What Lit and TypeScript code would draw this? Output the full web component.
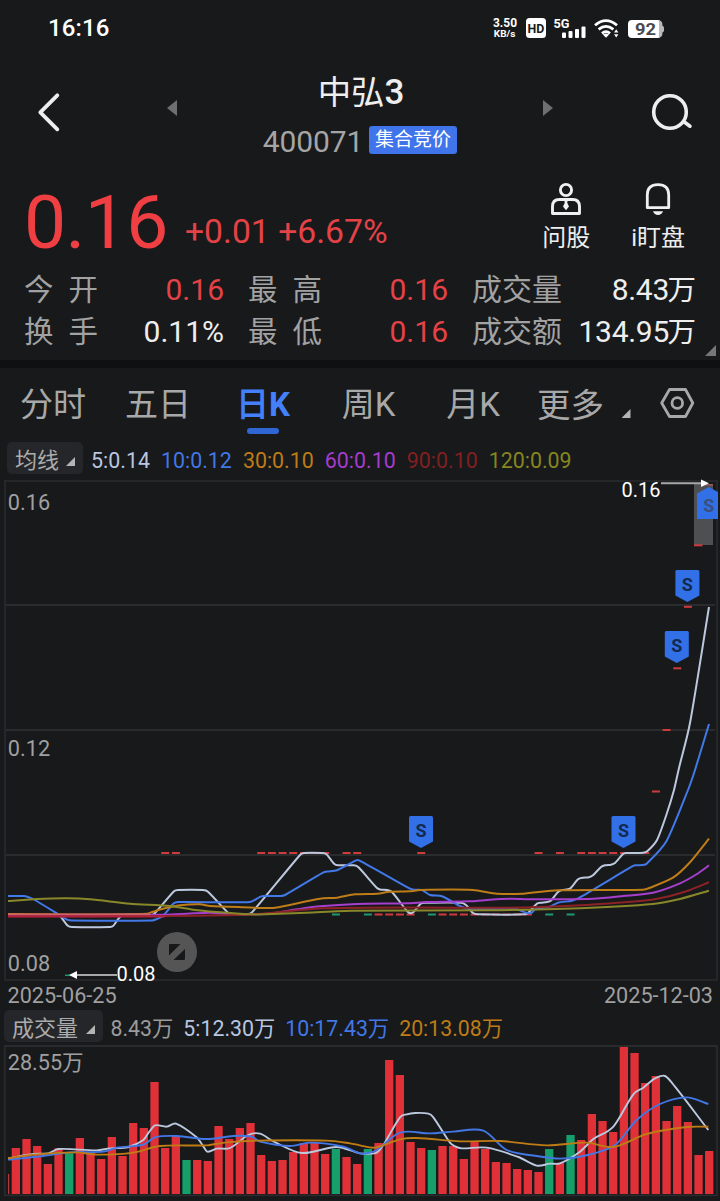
import { LitElement, html, svg, css } from "lit";
import { customElement } from "lit/decorators.js";

type Pt = [number, number];

const PITCH = 10.667;
const FIRST = 15.9;
const center = (i: number) => FIRST + PITCH * i;

function parse(src: string): Pt[] {
  return src.trim().split(/\s+/).map((p) => p.split(",").map(Number) as Pt);
}

/* Light Catmull-Rom smoothing through the given points. */
function curve(pts: Pt[], t = 0.12): string {
  let d = `M${pts[0][0]} ${pts[0][1]}`;
  for (let i = 0; i < pts.length - 1; i++) {
    const a = pts[Math.max(i - 1, 0)];
    const b = pts[i];
    const c = pts[i + 1];
    const e = pts[Math.min(i + 2, pts.length - 1)];
    const w = c[0] - b[0];
    const s1 = ((c[1] - a[1]) / (c[0] - a[0] || 1)) * w * t * 2;
    const s2 = ((e[1] - b[1]) / (e[0] - b[0] || 1)) * w * t * 2;
    const k = w * t * 2;
    d += `C${(b[0] + k).toFixed(2)} ${(b[1] + s1).toFixed(2)} ${(c[0] - k).toFixed(2)} ${(c[1] - s2).toFixed(2)} ${c[0]} ${c[1]}`;
  }
  return d;
}

const MA = {
  ma120: "8,901 37,899 67,898.3 90,899.3 130,903.7 170,906 193,909.7 217,912 250,914.3 265,914.3 307,912.7 353,910.7 490,910.3 580,908.3 653,904 680,899 709,890.7",
  ma90: "8,916.3 165,916 250,914.6 290,911 323,908.3 407,907.5 500,907.8 547,906.7 590,904.7 647,900.3 670,896 690,890 709,882.3",
  ma60: "8,915 165,914.7 190,913.5 210,912.8 228,914 265,914 297,909.3 320,906.3 357,904 407,903.3 427,902 470,901.3 490,899.7 512,898.7 530,899.3 593,898.7 623,896 653,892.7 680,883.3 697,874 709,865.3",
  ma30: "8,914 70,914.5 147,913.7 153,911.7 162,909 180,905.3 200,904.3 210,906 250,907.5 262,908 275,907.7 320,898.7 337,897.7 355,894.3 377,893.7 390,891.7 410,891.3 420,890 473,890 497,893.7 523,893.7 558,890.3 643,889.7 650,887.7 673,877.7 690,862.3 709,838.7",
  ma10: "8,896 24,896 28,897 33,899 58,914 67,919.6 72,920.5 152,920.5 157,919 163,916 173,904 178,902 250,902 260,896.9 264,896 281,896 285,895 323,872.7 327,871.6 337,870.3 355,860.9 359,860.3 410,888.7 414,889.7 422,890 430,895 442,896.3 460,906 467,908.6 515,908.7 521.7,911 527,913 531.7,912.7 535,909.3 550,906.7 558,902.7 572,900.7 580,897.3 631.7,866.7 635,865.3 643,865 646.7,863.7 666.7,840.7 688,790 695,770 709,724",
  ma5: "8,915 58,915.2 61,917 67.5,925.5 72,927 110,927 113.5,925.6 119,918 123,915 152,915 155,913 174,891.2 178,890 203,890 208,891.7 228,912.7 233,914.3 247,914.3 251.7,912.7 300,855 304,853 322,853 326.5,854.3 334,863.7 338,865.3 354,865.3 358.5,867.3 377,888 381,889.7 387,890 392,892 407,911 411,913.3 414,911.5 421,903.5 426,902.7 461,902.7 466,905 473,913 478,914.3 525,914.3 529,912 537,903.6 541,902.7 547,902 551,900.5 558,892 562,890 570,888.7 578,879.3 583,877.7 589,877.3 593,875.3 601,867 605,865.3 611,864.7 615,863 623,854 626,853 643,852.7 647.5,851 657,840 666,816 674,790 679,768 690,723 709,607",
};

const offset = (src: string, dx: number): Pt[] =>
  parse(src).map(([x, y]) => [x / 3 + dx, y / 3 + 1000] as Pt);

const VOL_MA = {
  v5: [
    ...offset("24,475 100,462 145,460 175,447 290,451 330,445 385,441 430,420 448,395 465,376 500,380 528,371 590,412 608,436 622,455 650,446 690,444 745,405 780,401 820,424 905,459 1010,441", 0),
    ...offset("0,460 30,461 50,458 70,435 120,352 140,343 165,339 205,341 220,352 270,428 285,439 305,445 380,443 475,471 530,497 570,491 600,490 660,455 700,417 760,380 820,283 850,263 885,235 915,228 945,260 1045,390", 360),
  ],
  v10: [
    ...offset("24,479 130,468 210,457 310,455 350,443 430,434 465,412 530,408 620,417 700,408 755,410 780,425 870,438 930,428 1030,440", 0),
    ...offset("0,460 25,459 50,450 120,398 210,400 280,395 370,392 440,450 530,468 600,476 670,468 765,435 830,360 900,312 980,292 1045,312", 360),
  ],
  v20: [
    ...offset("24,475 100,464 230,457 290,464 400,458 480,438 620,436 680,427 770,422 980,422 1050,430", 0),
    ...offset("0,436 45,443 120,418 170,414 300,424 420,423 560,436 680,428 760,441 860,402 980,381 1045,380", 360),
  ],
};

/* Heights of the volume bars in pixels. */
const VOLUME = [
  46, 55, 48, 30, 45.7, 40.7, 56, 41.3, 35, 57, 38, 71, 66, 112, 46, 58, 34, 34, 33, 68, 55, 66,
  71, 39, 33, 34, 42, 51, 51, 40, 45, 37, 30, 45, 51, 134, 119, 52, 46, 44, 48, 48, 35, 53, 45, 32,
  31, 25, 24, 22, 45, 31, 59, 54, 80, 73, 62, 147, 141, 111, 118, 73, 88, 72, 39, 43,
];
const FALLING = new Set([5, 16, 30, 33, 39, 50, 52]);

const TICKS: { i: number; y: number; up: boolean }[] = [
  ...[14, 15, 23, 24, 25, 26, 27, 28, 29, 31, 32, 38, 49, 51, 53, 54, 55, 56, 57, 58, 59].map((i) => ({ i, y: 853, up: true })),
  ...[34, 35, 36, 37, 40, 41, 42, 43, 44, 45, 46, 47, 48].map((i) => ({ i, y: 914.5, up: true })),
  ...[30, 33, 39, 50, 52].map((i) => ({ i, y: 914.5, up: false })),
  { i: 60, y: 791.5, up: true },
  { i: 61, y: 730, up: true },
  { i: 62, y: 668.3, up: true },
  { i: 63, y: 606.8, up: true },
];

const MARKERS: Pt[] = [[421, 816], [623.5, 816], [676.8, 631], [687.4, 570]];

@customElement("app-root")
export class AppRoot extends LitElement {
  static styles = css`
    :host {
      display: flex;
      flex-direction: column;
      width: 720px;
      height: 1201px;
      overflow: hidden;
      background: #18191b;
      color: #eeeeee;
      font-family: Roboto, "Noto Sans CJK SC", sans-serif;
      font-size: 22px;
      white-space: nowrap;
    }
    svg { display: block; flex: none; }
    .status { height: 56px; flex: none; display: flex; align-items: center; justify-content: space-between; padding: 0 56px 0 48px; color: #fff; }
    .clock { font-size: 24px; font-weight: 500; line-height: 56px; letter-spacing: 0.1px; }
    .head { height: 124px; flex: none; display: grid; grid-template-columns: 180px 362px 178px; }
    .titles { display: flex; flex-direction: column; align-items: center; }
    .name { font-size: 33.4px; line-height: 42px; height: 44px; margin-top: 16px; }
    .name b { font-weight: 500; font-size: 35px; }
    .code { display: flex; align-items: center; gap: 6px; font-size: 30px; line-height: 51px; color: #a5a5a5; height: 51px; letter-spacing: -0.15px; margin-right: 2px; }
    .badge { background: #3f74ea; color: #fff; border-radius: 3px; font-size: 19px; line-height: 28px; height: 28px; width: 88px; text-align: center; letter-spacing: 0; margin-bottom: 3px; }
    .quote { height: 89px; flex: none; display: flex; justify-content: space-between; padding: 0 35px 0 24px; }
    .prices { display: flex; align-items: flex-start; line-height: 84px; color: #ef3f43; }
    .last { font-size: 75px; width: 161px; letter-spacing: -0.6px; }
    .chg { font-size: 33.7px; color: #e34246; line-height: 104px; }
    .tools { display: flex; gap: 41px; }
    .tool { display: flex; flex-direction: column; align-items: center; font-size: 24px; line-height: 31px; }
    .stats { height: 91px; flex: none; display: grid; grid-template-columns: 200px 24px 200px 24px 224px; grid-template-rows: 42px 42px; padding: 0 24px; font-size: 30px; line-height: 42px; box-sizing: border-box; }
    .cell { display: flex; justify-content: space-between; }
    .lab { color: #a2a2a2; display: flex; justify-content: space-between; }
    .wide { width: 74px; font-size: 29.5px; }
    .red { color: #e34246; }
    .cell.c2 { grid-column: 3; }
    .cell.c3 { grid-column: 5; }
    .amount { letter-spacing: -0.3px; }
    .unit { font-size: 28.5px; margin-left: -1.5px; letter-spacing: 0; }
    .fold { width: 11px; height: 11px; background: #777; clip-path: polygon(100% 0, 100% 100%, 0 100%); }
    .foldrow { position: relative; height: 0; }
    .foldrow .fold { position: absolute; right: 4px; top: -15px; }
    .gap { height: 8px; flex: none; background: #0f1012; }
    .tabs { height: 74px; flex: none; display: grid; grid-template-columns: 106px 104px 106px 105px 104px 126px 69px; color: #a8a8a8; font-size: 33px; line-height: 73px; }
    .tab { text-align: center; position: relative; }
    .tab.on { color: #4380fa; }
    .tab.on b { font-weight: 700; }
    .day { -webkit-text-stroke: 0.9px #4380fa; }
    .tab.on::after { content: ""; position: absolute; left: 37px; top: 60px; width: 32px; height: 6px; border-radius: 3px; background: #2f66d4; }
    .more { display: flex; align-items: center; gap: 17.5px; padding-left: 12px; font-size: 33.5px; }
    .more .tri { margin-top: 17px; }
    .tri { width: 9px; height: 9px; background: #b4b4b4; clip-path: polygon(100% 0, 100% 100%, 0 100%); }
    .legend { display: flex; flex: none; align-items: flex-start; height: 34px; font-size: 21.4px; }
    .pick { display: flex; align-items: flex-start; gap: 7px; height: 32px; line-height: 37px; font-size: 22px; background: #252629; border-radius: 5px; color: #acacac; box-sizing: border-box; padding: 0 8px; margin-right: -3px; }
    .pick .tri { margin-top: 15px; }
    .legend.ma { padding-left: 7px; line-height: 37px; gap: 11px; }
    .legend.vol { padding-left: 4px; line-height: 39px; gap: 10px; font-size: 21.3px; }
    .legend.vol .pick { margin: 1px -2.5px 0 0; gap: 8px; }
    .c5 { color: #b9c6e0; } .c10 { color: #4277e6; } .c30 { color: #bd7c17; }
    .c60 { color: #a63bcf; } .c90 { color: #821f20; } .c120 { color: #86861f; } .cg { color: #9c9c9c; }
    .dates { display: flex; flex: none; justify-content: space-between; height: 25px; line-height: 23px; padding: 0 7px 0 7.5px; font-size: 21.6px; color: #a0a0a0; }
    text { font-family: Roboto, "Noto Sans CJK SC", sans-serif; }
  `;

  private line(d: string, color: string, w = 2) {
    return svg`<path d=${d} fill="none" stroke=${color} stroke-width=${w} stroke-linejoin="round"/>`;
  }

  private marker([x, y]: Pt) {
    return svg`<path d="M${x - 12} ${y + 1.5}q0 -1.5 1.5 -1.5h21q1.5 0 1.5 1.5v24l-12 6.5l-12 -6.5z" fill="#3270e8"/>
      <text x=${x} y=${y + 20.5} font-size="18" font-weight="700" fill="#14294f" text-anchor="middle">S</text>`;
  }

  private statusIcons() {
    return html`<svg width="172" height="24" viewBox="492 16 172 24">
      <g fill="#fff" font-weight="700">
        <text x="493" y="27.2" font-size="12" textLength="24" lengthAdjust="spacingAndGlyphs">3.50</text>
        <text x="493.8" y="37.3" font-size="9.8" textLength="21.5" lengthAdjust="spacingAndGlyphs">KB/s</text>
        <rect x="526" y="18" width="20" height="20" rx="3.5"/>
        <text x="527.6" y="32.7" font-size="12.5" fill="#18191b" textLength="16.8" lengthAdjust="spacingAndGlyphs">HD</text>
        <text x="553.4" y="27.6" font-size="12.5" textLength="16" lengthAdjust="spacingAndGlyphs">5G</text>
        <rect x="562" y="32.5" width="4" height="5.5" rx="1"/><rect x="568.5" y="31" width="4" height="7" rx="1"/>
        <rect x="575" y="29" width="4" height="9" rx="1"/><rect x="581.5" y="26.5" width="4" height="11.5" rx="1"/>
      </g>
      <g fill="none" stroke="#fff" stroke-width="2.7">
        <path d="M595 25.2q11 -9.2 22 0"/><path d="M598.6 29.4q7.4 -6 14.8 0"/><path d="M602 33.4q4 -3.4 8 0"/>
      </g>
      <path d="M602.8 34.4q3.2 -1.8 6.4 0l-3.2 3.4z" fill="#fff"/>
      <path d="M614 32.5l2.2 -3.3l2.2 3.3zM614 34.2l2.2 3.3l2.2 -3.3z" fill="#fff"/>
      <rect x="628" y="20" width="33.5" height="18" rx="4" fill="#fff"/>
      <path d="M659 20.6q3.4 .6 3.4 3.6v1.6q1.6 .4 1.6 2v2.6q0 1.6 -1.6 2v1.6q0 3 -3.4 3.4z" fill="#b9b9b9"/>
      <text x="635" y="35.4" font-size="16.5" font-weight="700" fill="#4a4a4c" textLength="21" lengthAdjust="spacingAndGlyphs">92</text>
    </svg>`;
  }

  private kChart() {
    return html`<svg width="720" height="508" viewBox="0 476 720 508">
      <g stroke="#2a2b2d" stroke-width="2" fill="none">
        <path d="M4 481H717M5 480V980H717M717 480V980" stroke-width="1.6"/>
        <path d="M6 605H715M6 730H715M6 855H715"/>
      </g>
      ${TICKS.map((t) => svg`<rect x=${center(t.i) - 4} y=${t.y - 1} width="8" height="2" fill=${t.up ? "#cf3a3d" : "#1f9a6c"}/>`)}
      ${this.line(curve(parse(MA.ma5)), "#bcc8de")}
      ${this.line(curve(parse(MA.ma10)), "#4279e8")}
      ${this.line(curve(parse(MA.ma30)), "#be7d18")}
      ${this.line(curve(parse(MA.ma60)), "#a63fce")}
      ${this.line(curve(parse(MA.ma90)), "#8c2226")}
      ${this.line(curve(parse(MA.ma120)), "#88882a")}
      <path d="M8 914.4H150" stroke="#d0606a" stroke-width="1.6"/>
      <path d="M8 916.4H165" stroke="#b0203c" stroke-width="2"/>
      <rect x="694" y="484" width="19" height="61" fill="#4e4f51"/>
      <rect x="694" y="544.3" width="8.5" height="2" fill="#cf3a3d"/>
      <rect x="705" y="484" width="8" height="1.5" fill="#9c5a58"/>
      <path d="M697 493.5L708.8 487L718 492V519H697z" fill="#3270e8"/>
      <text x="708.8" y="511.5" font-size="18" font-weight="700" fill="#3b4f7c" text-anchor="middle">S</text>
      ${MARKERS.map((m) => this.marker(m))}
      <path d="M661 483.3H702" stroke="#a8a8a8" stroke-width="2"/>
      <path d="M701 479.5L709 483.3L701 487z" fill="#fff"/>
      <path d="M65 975.3H72" stroke="#1f9a6c" stroke-width="1.5"/>
      <path d="M76 975H117" stroke="#a8a8a8" stroke-width="2"/>
      <path d="M77 971L69 975L77 979z" fill="#fff"/>
      <text x="621.6" y="497" font-size="20" fill="#fff">0.16</text>
      <text x="116.6" y="980.7" font-size="20" fill="#fff">0.08</text>
      <g font-size="21.7" fill="#a0a0a0">
        <text x="7.8" y="510">0.16</text>
        <text x="7.8" y="756">0.12</text>
        <text x="7.8" y="971">0.08</text>
      </g>
      <circle cx="177" cy="952" r="20" fill="#555556"/>
      <path d="M170 944h10.5l-11.5 11.5v-10.5q0 -1 1 -1zM185 949v10q0 1 -1 1h-10.5z" fill="#17181a"/>
    </svg>`;
  }

  private volChart() {
    return html`<svg width="720" height="158" viewBox="0 1043 720 158">
      <path d="M4 1046H717V1195.3H4.7V1046" fill="none" stroke="#2a2b2d" stroke-width="1.8"/>
      <rect x="8" y="1174" width="1.2" height="20" fill="#b0393b"/>
      ${VOLUME.map((h, i) => svg`<rect x=${center(i) - 4.2} y=${1194 - h} width="8.3" height=${h} fill=${FALLING.has(i) ? "#169f6b" : "#df3137"}/>`)}
      ${this.line(curve(VOL_MA.v5, 0.16), "#bcc8de", 1.9)}
      ${this.line(curve(VOL_MA.v10, 0.16), "#4277e6", 1.9)}
      ${this.line(curve(VOL_MA.v20, 0.16), "#c07c14", 1.9)}
      <text x="7.8" y="1070.3" font-size="21.6" fill="#a0a0a0">28.55万</text>
    </svg>`;
  }

  render() {
    return html`
      <div class="status"><span class="clock">16:16</span>${this.statusIcons()}</div>
      <div class="head">
        <svg width="180" height="124" viewBox="0 56 180 124">
          <path d="M57.3 95.3L40.3 112.3L57.3 129.3" fill="none" stroke="#eee" stroke-width="3.8" stroke-linecap="round" stroke-linejoin="round"/>
          <path d="M177 100V116L167 108z" fill="#6f6f6f"/>
        </svg>
        <div class="titles">
          <div class="name">中弘<b>3</b></div>
          <div class="code"><span>400071</span><span class="badge">集合竞价</span></div>
        </div>
        <svg width="178" height="124" viewBox="542 56 178 124">
          <path d="M543 100V116L553 108z" fill="#6f6f6f"/>
          <circle cx="670" cy="112" r="16.3" fill="none" stroke="#eee" stroke-width="3.6"/>
          <path d="M684 121.8L690 126.2" stroke="#eee" stroke-width="3.6" stroke-linecap="round"/>
        </svg>
      </div>
      <div class="quote">
        <div class="prices"><span class="last">0.16</span><span class="chg">+0.01 +6.67%</span></div>
        <div class="tools">
          <div class="tool">
            <svg width="34" height="43" viewBox="549 180 34 43">
              <g fill="none" stroke="#f0f0f0" stroke-width="2.9">
                <circle cx="566" cy="190" r="5.6"/>
                <path d="M552.5 213.5V206.5Q552.5 199.5 559.5 199.5H572.5Q579.5 199.5 579.5 206.5V213.5z" stroke-linejoin="round"/>
              </g>
              <path d="M564.3 200.5H567.7L567.2 202.8L569 206.5L566 210.3L563 206.5L564.8 202.8z" fill="#f0f0f0"/>
            </svg>
            <span>问股</span>
          </div>
          <div class="tool">
            <svg width="34" height="43" viewBox="641 180 34 43">
              <path d="M647.3 207.7V195Q647.3 184.6 658 184.6Q668.7 184.6 668.7 195V207.7z" fill="none" stroke="#f0f0f0" stroke-width="2.8" stroke-linejoin="round"/>
              <path d="M653 211.2H663Q661.5 215 658 215Q654.5 215 653 211.2z" fill="#f0f0f0"/>
            </svg>
            <span>i盯盘</span>
          </div>
        </div>
      </div>
      <div class="stats">
        <div class="cell"><span class="lab wide"><span>今</span><span>开</span></span><span class="red">0.16</span></div>
        <div class="cell c2"><span class="lab wide"><span>最</span><span>高</span></span><span class="red">0.16</span></div>
        <div class="cell c3"><span class="lab">成交量</span><span class="amount">8.43<span class="unit">万</span></span></div>
        <div class="cell"><span class="lab wide"><span>换</span><span>手</span></span><span>0.11%</span></div>
        <div class="cell c2"><span class="lab wide"><span>最</span><span>低</span></span><span class="red">0.16</span></div>
        <div class="cell c3"><span class="lab">成交额</span><span class="amount">134.95<span class="unit">万</span></span></div>
      </div>
      <div class="foldrow"><div class="fold"></div></div>
      <div class="gap"></div>
      <div class="tabs">
        <div class="tab">分时</div>
        <div class="tab">五日</div>
        <div class="tab on"><span class="day">日</span><b>K</b></div>
        <div class="tab">周K</div>
        <div class="tab">月K</div>
        <div class="more"><span>更多</span><span class="tri"></span></div>
        <svg width="69" height="74" viewBox="651 368 69 74">
          <path d="M669.5 389.5H685.5L692.8 403L685.5 416.5H669.5L661.7 403z" fill="none" stroke="#a8a8a8" stroke-width="2.8" stroke-linejoin="round"/>
          <circle cx="677.3" cy="403" r="5.3" fill="none" stroke="#a8a8a8" stroke-width="2.8"/>
        </svg>
      </div>
      <div class="legend ma">
        <div class="pick">均线<span class="tri"></span></div>
        <span class="c5">5:0.14</span><span class="c10">10:0.12</span><span class="c30">30:0.10</span><span class="c60">60:0.10</span><span class="c90">90:0.10</span><span class="c120">120:0.09</span>
      </div>
      ${this.kChart()}
      <div class="dates"><span>2025-06-25</span><span>2025-12-03</span></div>
      <div class="legend vol">
        <div class="pick">成交量<span class="tri"></span></div>
        <span class="cg">8.43万</span><span class="c5">5:12.30万</span><span class="c10">10:17.43万</span><span class="c30">20:13.08万</span>
      </div>
      ${this.volChart()}
    `;
  }
}
